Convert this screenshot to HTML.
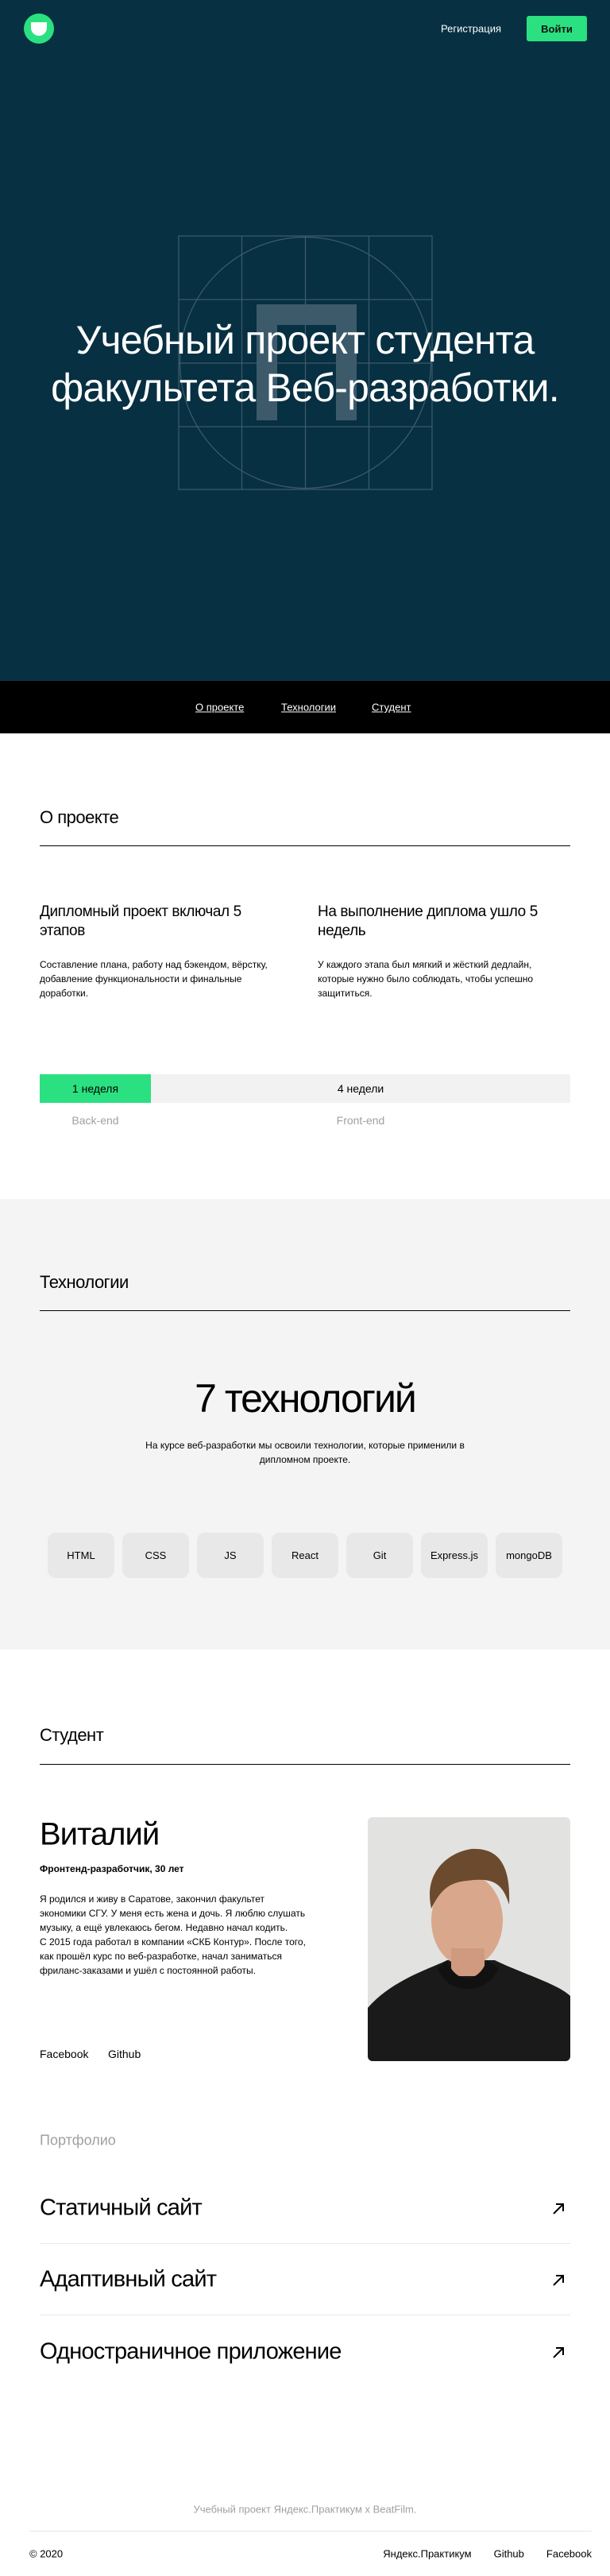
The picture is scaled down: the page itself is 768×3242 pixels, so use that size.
<!DOCTYPE html>
<html><head><meta charset="utf-8"><style>
*{margin:0;padding:0;box-sizing:border-box}
body{width:768px;height:3242px;position:relative;font-family:"Liberation Sans","Noto Sans CJK SC",sans-serif;background:#fff;color:#000;overflow:hidden}
.a{position:absolute;white-space:nowrap}
.c{transform:translateY(-50%)}
.hr{position:absolute;left:50px;width:668px;height:1px;background:#000}
.tile{position:absolute;top:1929px;width:84px;height:57px;background:#e8e8e8;border-radius:10px;font-size:13px;display:flex;align-items:center;justify-content:center}
.pi{position:absolute;left:50px;font-size:29px;letter-spacing:-0.8px}
.arr{position:absolute;left:694px}
</style></head><body>
<div class="a" style="left:0;top:0;width:768px;height:857px;background:#073042"></div>
<svg class="a" style="left:30px;top:17px" width="38" height="38" viewBox="0 0 38 38"><circle cx="19" cy="19" r="19" fill="#2be080"/><path d="M9 11h20v7a10 10 0 0 1-20 0z" fill="#fff"/></svg>
<div class="a c" style="left:555px;top:36px;font-size:13px;color:#fff">Регистрация</div>
<div class="a" style="left:663px;top:20px;width:76px;height:32px;background:#2be080;border-radius:3px;font-size:13px;font-weight:bold;display:flex;align-items:center;justify-content:center;color:#111">Войти</div>
<svg class="a" style="left:224px;top:296px" width="322" height="322" viewBox="0 0 322 322">
<g stroke="#3b5a6a" stroke-width="1.3" fill="none">
<rect x="1" y="1" width="319" height="319"/>
<line x1="80.5" y1="1" x2="80.5" y2="320"/><line x1="160.5" y1="1" x2="160.5" y2="320"/><line x1="240.5" y1="1" x2="240.5" y2="320"/>
<line x1="1" y1="81" x2="320" y2="81"/><line x1="1" y1="161" x2="320" y2="161"/><line x1="1" y1="241" x2="320" y2="241"/>
<circle cx="160.5" cy="160.5" r="158"/></g>
<path d="M99 87h126v146h-26V113h-74v120H99z" fill="#3d5a6b"/>
</svg>
<div class="a" style="left:0;width:768px;top:398px;text-align:center;color:#fff;font-size:50px;line-height:60px;letter-spacing:-0.8px">Учебный проект студента<br>факультета Веб-разработки.</div>
<div class="a" style="left:0;top:857px;width:768px;height:66px;background:#000"></div>
<div class="a c" style="left:246px;top:890px;font-size:13px;color:#fff;text-decoration:underline">О проекте</div>
<div class="a c" style="left:354px;top:890px;font-size:13px;color:#fff;text-decoration:underline">Технологии</div>
<div class="a c" style="left:468px;top:890px;font-size:13px;color:#fff;text-decoration:underline">Студент</div>

<div class="a c" style="left:50px;top:1029px;font-size:22px;letter-spacing:-0.5px">О проекте</div>
<div class="hr" style="top:1064px"></div>
<div class="a" style="left:50px;top:1136px;font-size:19px;line-height:24px;letter-spacing:-0.4px">Дипломный проект включал 5<br>этапов</div>
<div class="a" style="left:400px;top:1136px;font-size:19px;line-height:24px;letter-spacing:-0.4px">На выполнение диплома ушло 5<br>недель</div>
<div class="a" style="left:50px;top:1205px;font-size:12px;line-height:18px">Составление плана, работу над бэкендом, вёрстку,<br>добавление функциональности и финальные<br>доработки.</div>
<div class="a" style="left:400px;top:1205px;font-size:12px;line-height:18px">У каждого этапа был мягкий и жёсткий дедлайн,<br>которые нужно было соблюдать, чтобы успешно<br>защититься.</div>
<div class="a" style="left:50px;top:1352px;width:668px;height:36px;background:#f2f2f2"></div>
<div class="a" style="left:50px;top:1352px;width:140px;height:36px;background:#2be080;font-size:14px;display:flex;align-items:center;justify-content:center">1 неделя</div>
<div class="a" style="left:190px;top:1352px;width:528px;height:36px;font-size:14px;display:flex;align-items:center;justify-content:center">4 недели</div>
<div class="a c" style="left:50px;width:140px;text-align:center;top:1410px;font-size:14px;color:#a0a0a0">Back-end</div>
<div class="a c" style="left:190px;width:528px;text-align:center;top:1410px;font-size:14px;color:#a0a0a0">Front-end</div>

<div class="a" style="left:0;top:1509px;width:768px;height:567px;background:#f4f4f4"></div>
<div class="a c" style="left:50px;top:1614px;font-size:22px;letter-spacing:-0.5px">Технологии</div>
<div class="hr" style="top:1649px"></div>
<div class="a c" style="left:0;width:768px;text-align:center;top:1760px;font-size:50px;letter-spacing:-2px">7 технологий</div>
<div class="a" style="left:0;width:768px;text-align:center;top:1810px;font-size:12px;line-height:18px">На курсе веб-разработки мы освоили технологии, которые применили в<br>дипломном проекте.</div>
<div class="tile" style="left:60px">HTML</div>
<div class="tile" style="left:154px">CSS</div>
<div class="tile" style="left:248px">JS</div>
<div class="tile" style="left:342px">React</div>
<div class="tile" style="left:436px">Git</div>
<div class="tile" style="left:530px">Express.js</div>
<div class="tile" style="left:624px">mongoDB</div>

<div class="a c" style="left:50px;top:2184px;font-size:22px;letter-spacing:-0.5px">Студент</div>
<div class="hr" style="top:2220px"></div>
<div class="a c" style="left:50px;top:2309px;font-size:40px;letter-spacing:-1px">Виталий</div>
<div class="a c" style="left:50px;top:2352px;font-size:12px;font-weight:bold">Фронтенд-разработчик, 30 лет</div>
<div class="a" style="left:50px;top:2381px;font-size:12px;line-height:18px">Я родился и живу в Саратове, закончил факультет<br>экономики СГУ. У меня есть жена и дочь. Я люблю слушать<br>музыку, а ещё увлекаюсь бегом. Недавно начал кодить.<br>С 2015 года работал в компании «СКБ Контур». После того,<br>как прошёл курс по веб-разработке, начал заниматься<br>фриланс-заказами и ушёл с постоянной работы.</div>
<div class="a c" style="left:50px;top:2585px;font-size:14px">Facebook</div>
<div class="a c" style="left:136px;top:2585px;font-size:14px">Github</div>
<svg class="a" style="left:463px;top:2287px;border-radius:6px" width="255" height="307" viewBox="0 0 255 307">
<rect width="255" height="307" fill="#e2e2e0"/>
<path d="M0 240 C30 205 80 190 100 180 L160 180 C190 195 240 210 255 225 V307 H0z" fill="#1a1a1a"/>
<ellipse cx="125" cy="130" rx="45" ry="58" fill="#d9a88c"/>
<rect x="105" y="165" width="42" height="35" fill="#cf9a80"/>
<path d="M80 115 C70 70 100 45 130 40 C165 38 180 60 178 110 C170 85 160 75 125 80 C100 82 90 95 80 115z" fill="#6b4a2e"/>
<path d="M100 180 C110 210 140 210 150 180 L165 190 C150 225 100 225 88 190z" fill="#111"/>
</svg>
<div class="a c" style="left:50px;top:2694px;font-size:18px;color:#a0a0a0">Портфолио</div>

<div class="pi a c" style="top:2779px">Статичный сайт</div>
<div class="hr" style="top:2823px;background:#e8e8e8"></div>
<div class="pi a c" style="top:2869px">Адаптивный сайт</div>
<div class="hr" style="top:2913px;background:#e8e8e8"></div>
<div class="pi a c" style="top:2960px">Одностраничное приложение</div>
<svg class="arr" style="top:2771px" width="18" height="18" viewBox="0 0 18 18"><path d="M3 15L15 3M6 3h9v9" stroke="#000" stroke-width="2" fill="none"/></svg>
<svg class="arr" style="top:2861px" width="18" height="18" viewBox="0 0 18 18"><path d="M3 15L15 3M6 3h9v9" stroke="#000" stroke-width="2" fill="none"/></svg>
<svg class="arr" style="top:2952px" width="18" height="18" viewBox="0 0 18 18"><path d="M3 15L15 3M6 3h9v9" stroke="#000" stroke-width="2" fill="none"/></svg>

<div class="a c" style="left:0;width:768px;text-align:center;top:3158px;font-size:13px;color:#a0a0a0">Учебный проект Яндекс.Практикум х BeatFilm.</div>
<div class="a" style="left:37px;top:3185px;width:708px;height:1px;background:#e8e8e8"></div>
<div class="a c" style="left:37px;top:3214px;font-size:13px">© 2020</div>
<div class="a c" style="right:23px;top:3214px;font-size:13px">Яндекс.Практикум<span style="margin-left:28px">Github</span><span style="margin-left:28px">Facebook</span></div>
</body></html>
